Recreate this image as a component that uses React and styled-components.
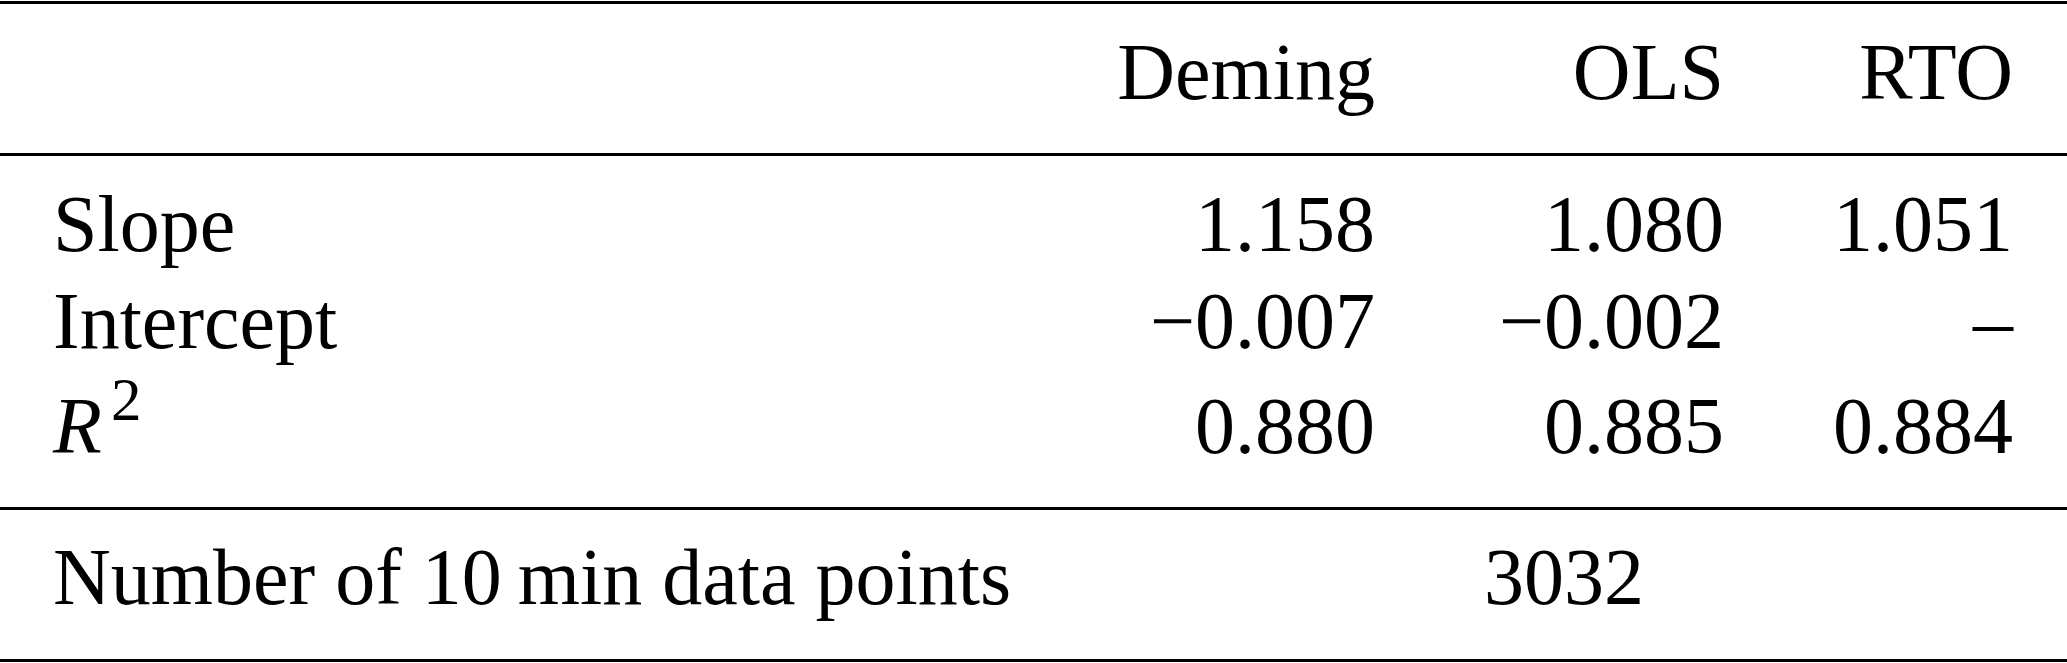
import React from 'react'
import styled, { createGlobalStyle } from 'styled-components'

const GlobalStyle = createGlobalStyle`
  html, body {
    margin: 0;
    padding: 0;
    background: #ffffff;
  }
  body {
    font-family: "Liberation Serif", "Times New Roman", serif;
    color: #000000;
  }
`

const Table = styled.div`
  width: 2067px;
  padding-top: 1px;
  font-size: 80px;
  line-height: 80px;
`

const Rule = styled.div`
  height: 3px;
  background: #000000;
`

const Section = styled.div`
  display: grid;
  grid-template-columns: 1fr 300px 349px 289px;
  row-gap: 17px;
  padding: ${p => p.$pad} 54px ${p => p.$padBottom} 53px;
`

const Label = styled.div`
  grid-column: 1;
  white-space: nowrap;
  margin-top: ${p => (p.$lift ? '8px' : '0')};
`

const Value = styled.div`
  text-align: ${p => (p.$left ? 'left' : 'right')};
  white-space: nowrap;
  grid-column: ${p => p.$span || 'auto'};
  padding-left: ${p => p.$indent || '0'};
  margin-top: ${p => (p.$lift ? '8px' : '0')};
`

const Italic = styled.span`
  font-style: italic;
`

const Sup = styled.span`
  display: inline-block;
  font-size: 61px;
  line-height: 0;
  vertical-align: 33px;
  margin-left: 9px;
`

const rows = [
  { label: 'Slope', values: ['1.158', '1.080', '1.051'] },
  { label: 'Intercept', values: ['\u22120.007', '\u22120.002', '\u2013'] },
  { label: 'R2', values: ['0.880', '0.885', '0.884'], lift: true },
]

export default function App() {
  return (
    <>
      <GlobalStyle />
      <Table>
        <Rule />
        <Section $pad="28px" $padBottom="41px">
          <Label />
          <Value>Deming</Value>
          <Value>OLS</Value>
          <Value>RTO</Value>
        </Section>
        <Rule />
        <Section $pad="28px" $padBottom="41px">
          {rows.map(row => (
            <React.Fragment key={row.label}>
              <Label $lift={row.lift}>
                {row.label === 'R2' ? (
                  <>
                    <Italic>R</Italic>
                    <Sup>2</Sup>
                  </>
                ) : (
                  row.label
                )}
              </Label>
              {row.values.map((v, i) => (
                <Value key={i} $lift={row.lift}>{v}</Value>
              ))}
            </React.Fragment>
          ))}
        </Section>
        <Rule />
        <Section $pad="27px" $padBottom="42px">
          <Label>Number of 10{'\u2009'}min data points</Label>
          <Value $left $span="3 / 5" $indent="109px">3032</Value>
        </Section>
        <Rule />
      </Table>
    </>
  )
}
